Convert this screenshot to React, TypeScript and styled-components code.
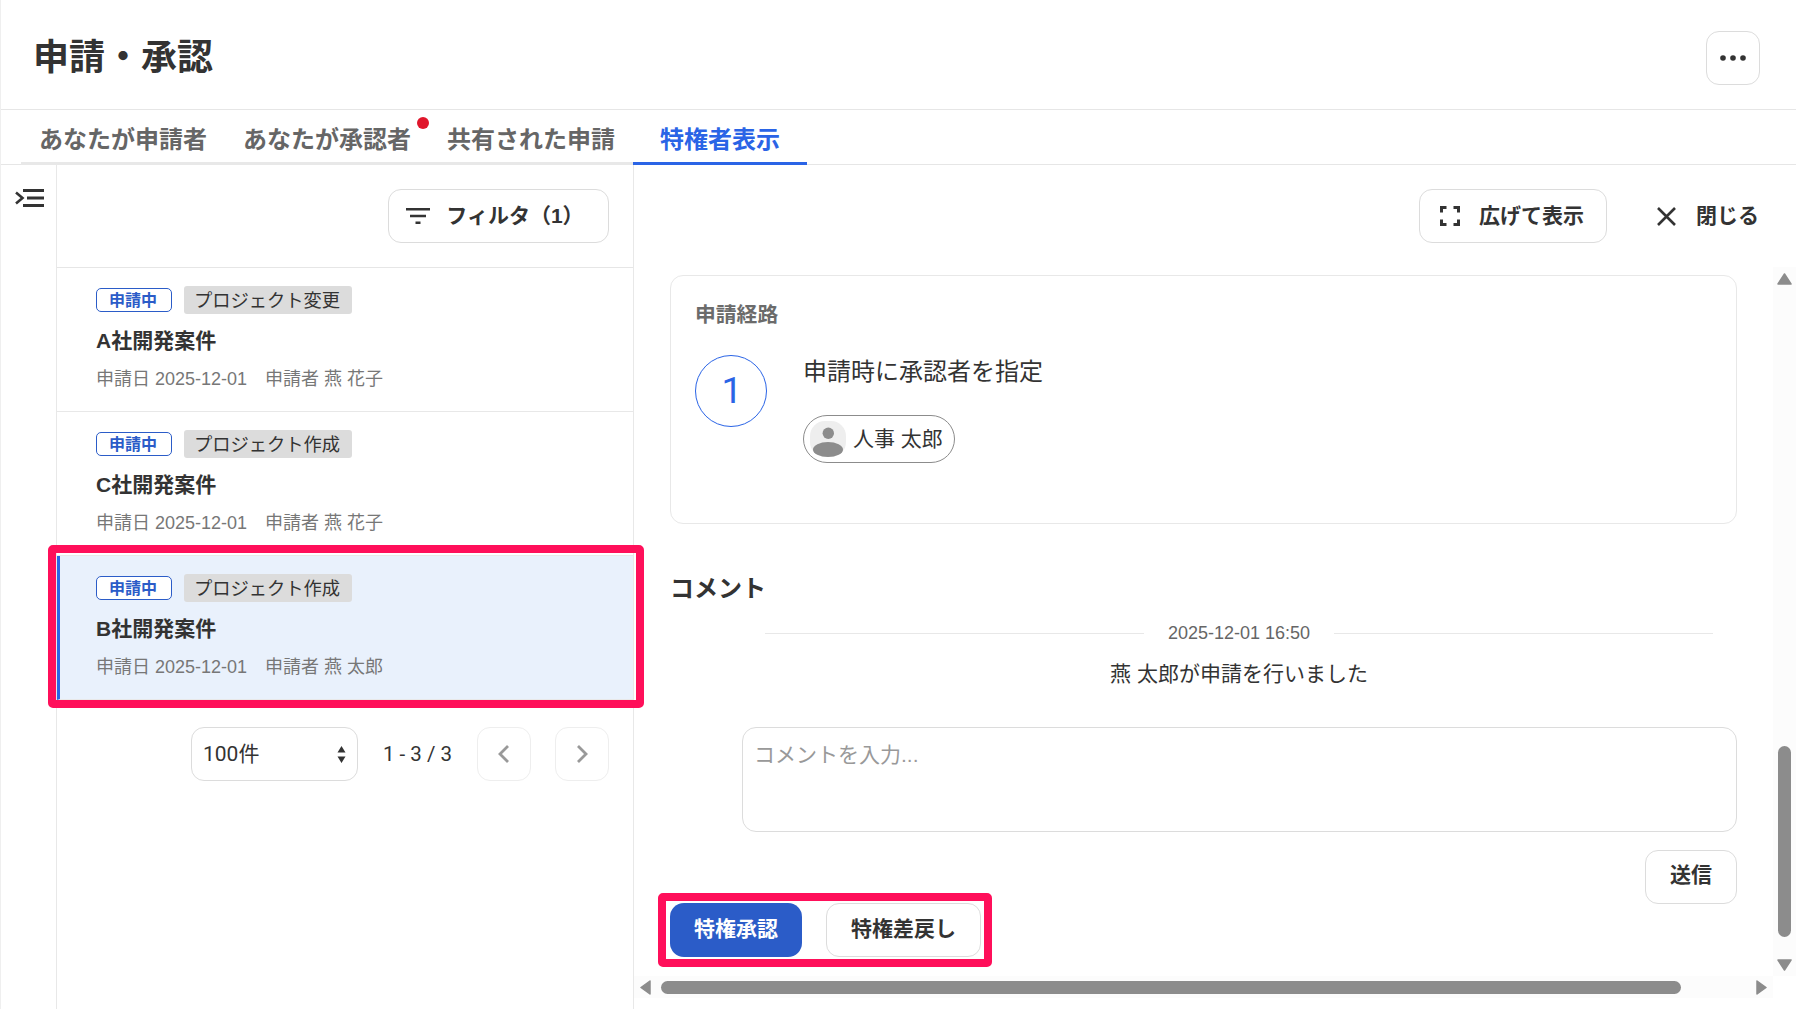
import React from "react";
import styled, { createGlobalStyle } from "styled-components";

const Global = createGlobalStyle`
  html, body { margin: 0; padding: 0; background: #fff; }
  body { font-family: "Liberation Sans", "Noto Sans CJK JP", sans-serif; color: #333; }
  * { box-sizing: border-box; }
`;

const Page = styled.div`
  width: 1796px;
  height: 1009px;
  overflow: hidden;
  display: flex;
  flex-direction: column;
  background: #fff;
  border-left: 1px solid #efefef;
`;

const Header = styled.header`
  height: 110px;
  flex: none;
  display: flex;
  align-items: flex-start;
  justify-content: space-between;
  padding: 31px 36px 0 32px;
  border-bottom: 1px solid #e6e6e6;
`;

const Title = styled.h1`
  margin: 2px 0 0;
  font-size: 36px;
  line-height: 50px;
  font-weight: 700;
  color: #333;
`;

const OutlineButton = styled.button<{ $w?: number; $pr?: number; $gap?: number }>`
  height: 54px;
  width: ${(p) => (p.$w ? `${p.$w}px` : "auto")};
  flex: none;
  display: inline-flex;
  align-items: center;
  justify-content: center;
  gap: ${(p) => p.$gap ?? 19}px;
  background: #fff;
  border: 1px solid #dcdcdc;
  border-radius: 13px;
  font: inherit;
  font-size: 21px;
  font-weight: 700;
  color: #333;
  padding: 0 ${(p) => p.$pr ?? 0}px 0 0;
`;

const ButtonLabel = styled.span<{ $lift?: number }>`
  display: block;
  padding-bottom: ${(p) => p.$lift ?? 4}px;
`;

const Tabs = styled.nav`
  height: 55px;
  flex: none;
  display: flex;
  align-items: stretch;
  padding-left: 20px;
  border-bottom: 1px solid #e6e6e6;
`;

const Tab = styled.div<{ $active?: boolean }>`
  position: relative;
  display: flex;
  align-items: center;
  padding: 3px ${(p) => (p.$active ? 27 : 18)}px 0;
  margin-bottom: -1px;
  font-size: 24px;
  font-weight: 700;
  color: ${(p) => (p.$active ? "#2a64e6" : "#666")};
  border-bottom: ${(p) => (p.$active ? "3px solid #2a64e6" : "3px solid #e8e8e8")};
`;

const Dot = styled.span`
  position: absolute;
  top: 7px;
  right: 0;
  width: 12px;
  height: 12px;
  border-radius: 50%;
  background: #e0162b;
`;

const Main = styled.main`
  flex: 1;
  min-height: 0;
  display: flex;
`;

const Rail = styled.aside`
  width: 56px;
  flex: none;
  border-right: 1px solid #e8e8e8;
  padding: 24px 0 0 14px;
  svg { display: block; }
`;

const ListPanel = styled.section`
  width: 577px;
  flex: none;
  border-right: 1px solid #e8e8e8;
  display: flex;
  flex-direction: column;
`;

const ListTools = styled.div`
  height: 103px;
  flex: none;
  display: flex;
  justify-content: flex-end;
  padding: 24px 24px 0 0;
  border-bottom: 1px solid #e6e6e6;
`;

const Item = styled.article<{ $selected?: boolean }>`
  position: relative;
  height: 144px;
  flex: none;
  display: flex;
  flex-direction: column;
  padding: 18px 0 0 ${(p) => (p.$selected ? 36 : 39)}px;
  background: ${(p) => (p.$selected ? "#e9f1fc" : "#fff")};
  border-left: ${(p) => (p.$selected ? "3px solid #2a64e6" : "0")};
  border-bottom: 1px solid #e8e8e8;
`;

const TagRow = styled.div`
  display: flex;
  align-items: center;
  gap: 12px;
  height: 28px;
`;

const Status = styled.span`
  width: 76px;
  height: 24px;
  display: flex;
  align-items: center;
  justify-content: center;
  padding: 0 2px 3px 0;
  background: #fff;
  border: 1px solid #2b5cc8;
  border-radius: 5px;
  color: #2b5cc8;
  font-size: 16px;
  font-weight: 700;
`;

const Category = styled.span`
  width: 168px;
  height: 28px;
  display: flex;
  align-items: center;
  justify-content: center;
  padding: 0 2px 3px 0;
  background: #dcdcdc;
  border-radius: 3px;
  color: #333;
  font-size: 18.3px;
`;

const ItemTitle = styled.div`
  margin-top: 12px;
  font-size: 21px;
  line-height: 30px;
  font-weight: 700;
  color: #333;
`;

const Meta = styled.div`
  margin-top: 10px;
  display: flex;
  gap: 18px;
  font-size: 18px;
  line-height: 26px;
  color: #777;
`;

const Highlight = styled.div<{ $inset: string }>`
  position: absolute;
  inset: ${(p) => p.$inset};
  border: 8px solid #ff0f5a;
  border-radius: 5px;
  pointer-events: none;
`;

const ActionHighlight = styled(Highlight)`
  width: 334px;
`;

const Pager = styled.div`
  margin-top: 27px;
  height: 54px;
  display: flex;
  align-items: center;
  justify-content: flex-end;
  gap: 24px;
  padding-right: 24px;
`;

const PageSize = styled.div`
  width: 167px;
  height: 54px;
  margin-right: 1px;
  display: flex;
  align-items: center;
  justify-content: space-between;
  padding: 0 11px 4px 11px;
  border: 1px solid #dcdcdc;
  border-radius: 13px;
  font-family: Roboto, "Noto Sans CJK JP", sans-serif;
  font-size: 21px;
  color: #333;
  svg { margin-top: 4px; }
`;

const Count = styled.span`
  font-family: Roboto, sans-serif;
  font-size: 20.5px;
  color: #333;
  margin-right: 1px;
`;

const PageButton = styled.button`
  width: 54px;
  height: 54px;
  display: flex;
  align-items: center;
  justify-content: center;
  background: #fff;
  border: 1px solid #eeeeee;
  border-radius: 13px;
  padding: 0;
`;

const DetailPanel = styled.section`
  flex: 1;
  min-width: 0;
  display: flex;
  flex-direction: column;
`;

const DetailTools = styled.div`
  height: 102px;
  flex: none;
  display: flex;
  justify-content: flex-end;
  gap: 50px;
  padding: 24px 37px 0 0;
`;

const CloseAction = styled.div`
  height: 54px;
  display: flex;
  align-items: center;
  gap: 20px;
  font-size: 21px;
  font-weight: 700;
`;

const DetailBody = styled.div`
  height: 709px;
  flex: none;
  display: flex;
`;

const Scroll = styled.div`
  flex: 1;
  min-width: 0;
  padding: 8px 36px 0 36px;
  display: flex;
  flex-direction: column;
`;

const VBar = styled.div`
  width: 23px;
  flex: none;
  background: #fcfcfc;
  display: flex;
  flex-direction: column;
  align-items: center;
  padding: 6px 0 5px;
`;

const VThumb = styled.div`
  width: 13px;
  height: 191px;
  margin: 461px 0 22px;
  border-radius: 7px;
  background: #8c8c8c;
`;

const HBar = styled.div`
  height: 22px;
  flex: none;
  width: 1139px;
  background: #fcfcfc;
  display: flex;
  align-items: center;
  padding: 0 6px 0 6px;
`;

const HThumb = styled.div`
  width: 1020px;
  height: 13px;
  margin: 0 75px 0 10px;
  border-radius: 7px;
  background: #8c8c8c;
`;

const Card = styled.div`
  height: 249px;
  flex: none;
  border: 1px solid #e8e8e8;
  border-radius: 13px;
  padding: 24px 24px 0;
`;

const CardLabel = styled.div`
  font-size: 20.8px;
  line-height: 30px;
  font-weight: 700;
  color: #6b6b6b;
`;

const Route = styled.div`
  margin-top: 25px;
  display: flex;
  gap: 36px;
`;

const StepCircle = styled.div`
  width: 72px;
  height: 72px;
  flex: none;
  display: flex;
  align-items: center;
  justify-content: center;
  padding: 0 0 2px 2px;
  border: 1px solid #2a64e6;
  border-radius: 50%;
  color: #2a64e6;
  font-family: Roboto, sans-serif;
  font-size: 37px;
`;

const RouteInfo = styled.div`
  display: flex;
  flex-direction: column;
  align-items: flex-start;
  margin-top: -1px;
`;

const RouteText = styled.div`
  font-size: 24px;
  line-height: 36px;
  color: #333;
`;

const Chip = styled.div`
  margin-top: 25px;
  width: 152px;
  height: 48px;
  display: flex;
  align-items: center;
  gap: 7px;
  padding: 0 0 0 6px;
  border: 1px solid #8c8c8c;
  border-radius: 24px;
  font-size: 21px;
  color: #333;
`;

const ChipName = styled.span`
  display: block;
  padding-bottom: 4px;
`;

const Avatar = styled.svg`
  width: 36px;
  height: 36px;
  flex: none;
  display: block;
`;

const CommentHeading = styled.h2`
  margin: 47px 0 0;
  font-size: 24px;
  line-height: 36px;
  font-weight: 700;
  color: #333;
`;

const CommentBlock = styled.div`
  margin-left: 71px;
  display: flex;
  flex-direction: column;
`;

const LogStamp = styled.div`
  margin-top: 13px;
  padding: 0 24px;
  height: 26px;
  display: flex;
  align-items: center;
  gap: 24px;
  font-size: 18px;
  color: #666;
  &::before, &::after {
    content: "";
    flex: 1;
    height: 1px;
    background: #e8e8e8;
  }
`;

const LogMessage = styled.div`
  margin-top: 13px;
  text-align: center;
  font-size: 21px;
  line-height: 30px;
  color: #333;
`;

const CommentInput = styled.textarea`
  margin: 38px 0 0 1px;
  height: 105px;
  width: calc(100% - 1px);
  display: block;
  resize: none;
  padding: 13px 11px;
  border: 1px solid #dcdcdc;
  border-radius: 14px;
  font: inherit;
  font-size: 21px;
  line-height: 28px;
  outline: none;
  &::placeholder { color: #999; opacity: 1; }
`;

const SendRow = styled.div`
  margin-top: 18px;
  display: flex;
  justify-content: flex-end;
`;

const ActionBar = styled.div`
  position: relative;
  margin-top: -1px;
  display: flex;
  gap: 24px;
`;

const PrimaryButton = styled.button`
  width: 132px;
  height: 54px;
  border: 0;
  border-radius: 14px;
  background: #2b5cc8;
  color: #fff;
  font: inherit;
  font-size: 21px;
  font-weight: 700;
  padding: 0;
`;

const IconStroke = { fill: "none", stroke: "#333", strokeWidth: 2.6 } as const;
const Chevron = ({ d }: { d: string }) => (
  <svg width="16" height="20" viewBox="0 0 16 20" fill="none" stroke="#999" strokeWidth="2.8">
    <path d={d} />
  </svg>
);

const Triangle = ({ d, w, h }: { d: string; w: number; h: number }) => (
  <svg width={w} height={h} viewBox={`0 0 ${w} ${h}`} style={{ flex: "none", display: "block" }}>
    <path d={d} fill="#8c8c8c" stroke="#8c8c8c" strokeWidth="1.5" strokeLinejoin="round" />
  </svg>
);

const items = [
  { cat: "プロジェクト変更", title: "A社開発案件", who: "燕 花子" },
  { cat: "プロジェクト作成", title: "C社開発案件", who: "燕 花子" },
  { cat: "プロジェクト作成", title: "B社開発案件", who: "燕 太郎", selected: true },
];

export default function App() {
  return (
    <Page>
      <Global />
      <Header>
        <Title>申請・承認</Title>
        <OutlineButton $w={54} aria-label="more">
          <svg width="26" height="6" viewBox="0 0 26 6" fill="#333">
            <circle cx="3" cy="3" r="2.8" />
            <circle cx="13" cy="3" r="2.8" />
            <circle cx="23" cy="3" r="2.8" />
          </svg>
        </OutlineButton>
      </Header>
      <Tabs>
        <Tab>あなたが申請者</Tab>
        <Tab>
          あなたが承認者
          <Dot />
        </Tab>
        <Tab>共有された申請</Tab>
        <Tab $active>特権者表示</Tab>
      </Tabs>
      <Main>
        <Rail>
          <svg width="29" height="18" viewBox="0 0 29 18" fill="none" stroke="#333">
            <path d="M8 1.5H29M12 9H29M8 16.5H29" strokeWidth="3" />
            <path d="M1 3.5L7.5 9L1 14.5" strokeWidth="2.6" />
          </svg>
        </Rail>
        <ListPanel>
          <ListTools>
            <OutlineButton $w={221} $gap={16} $pr={7}>
              <svg width="24" height="16" viewBox="0 0 24 16" {...IconStroke}>
                <path d="M0 1.2H24M4 8H20M9.5 14.8H14.5" />
              </svg>
              <ButtonLabel>フィルタ（1）</ButtonLabel>
            </OutlineButton>
          </ListTools>
          {items.map((it) => (
            <Item key={it.title} $selected={it.selected}>
              <TagRow>
                <Status>申請中</Status>
                <Category>{it.cat}</Category>
              </TagRow>
              <ItemTitle>{it.title}</ItemTitle>
              <Meta>
                <span>申請日 2025-12-01</span>
                <span>申請者 {it.who}</span>
              </Meta>
              {it.selected && <Highlight $inset="-11px -11px -9px -12px" />}
            </Item>
          ))}
          <Pager>
            <PageSize>
              100件
              <svg width="9" height="17" viewBox="0 0 9 17" fill="#333">
                <path d="M4.5 0L8.5 6.5H0.5ZM4.5 17L0.5 10.5H8.5Z" />
              </svg>
            </PageSize>
            <Count>1 - 3 / 3</Count>
            <PageButton aria-label="previous">
              <Chevron d="M12 2L4 10L12 18" />
            </PageButton>
            <PageButton aria-label="next">
              <Chevron d="M4 2L12 10L4 18" />
            </PageButton>
          </Pager>
        </ListPanel>
        <DetailPanel>
          <DetailTools>
            <OutlineButton $w={188} $pr={2}>
              <svg width="20" height="20" viewBox="0 0 20 20" {...IconStroke} strokeWidth="3">
                <path d="M1.5 6.5V1.5H6.5M13.5 1.5H18.5V6.5M18.5 13.5V18.5H13.5M6.5 18.5H1.5V13.5" />
              </svg>
              <ButtonLabel>広げて表示</ButtonLabel>
            </OutlineButton>
            <CloseAction>
              <svg width="19" height="19" viewBox="0 0 19 19" {...IconStroke}>
                <path d="M1 1L18 18M18 1L1 18" />
              </svg>
              <ButtonLabel>閉じる</ButtonLabel>
            </CloseAction>
          </DetailTools>
          <DetailBody>
            <Scroll>
              <Card>
                <CardLabel>申請経路</CardLabel>
                <Route>
                  <StepCircle>1</StepCircle>
                  <RouteInfo>
                    <RouteText>申請時に承認者を指定</RouteText>
                    <Chip>
                      <Avatar viewBox="0 0 36 36">
                        <rect width="36" height="36" rx="15" fill="#eeeeee" />
                        <circle cx="18.3" cy="12.3" r="5.7" fill="#8c8c8c" />
                        <ellipse cx="18" cy="28.5" rx="15" ry="7.5" fill="#8c8c8c" />
                      </Avatar>
                      <ChipName>人事 太郎</ChipName>
                    </Chip>
                  </RouteInfo>
                </Route>
              </Card>
              <CommentHeading>コメント</CommentHeading>
              <CommentBlock>
                <LogStamp>2025-12-01 16:50</LogStamp>
                <LogMessage>燕 太郎が申請を行いました</LogMessage>
                <CommentInput placeholder="コメントを入力..." />
                <SendRow>
                  <OutlineButton $w={92}>
                    <ButtonLabel $lift={8}>送信</ButtonLabel>
                  </OutlineButton>
                </SendRow>
              </CommentBlock>
              <ActionBar>
                <PrimaryButton>
                  <ButtonLabel $lift={6}>特権承認</ButtonLabel>
                </PrimaryButton>
                <OutlineButton $w={155}>
                  <ButtonLabel $lift={6}>特権差戻し</ButtonLabel>
                </OutlineButton>
                <ActionHighlight $inset="-10px auto -10px -12px" />
              </ActionBar>
            </Scroll>
            <VBar>
              <Triangle w={15} h={12} d="M7.5 1L14 11H1Z" />
              <VThumb />
              <Triangle w={15} h={12} d="M7.5 11L14 1H1Z" />
            </VBar>
          </DetailBody>
          <HBar>
            <Triangle w={11} h={15} d="M1 7.5L10 1V14Z" />
            <HThumb />
            <Triangle w={11} h={15} d="M10 7.5L1 1V14Z" />
          </HBar>
        </DetailPanel>
      </Main>
    </Page>
  );
}
